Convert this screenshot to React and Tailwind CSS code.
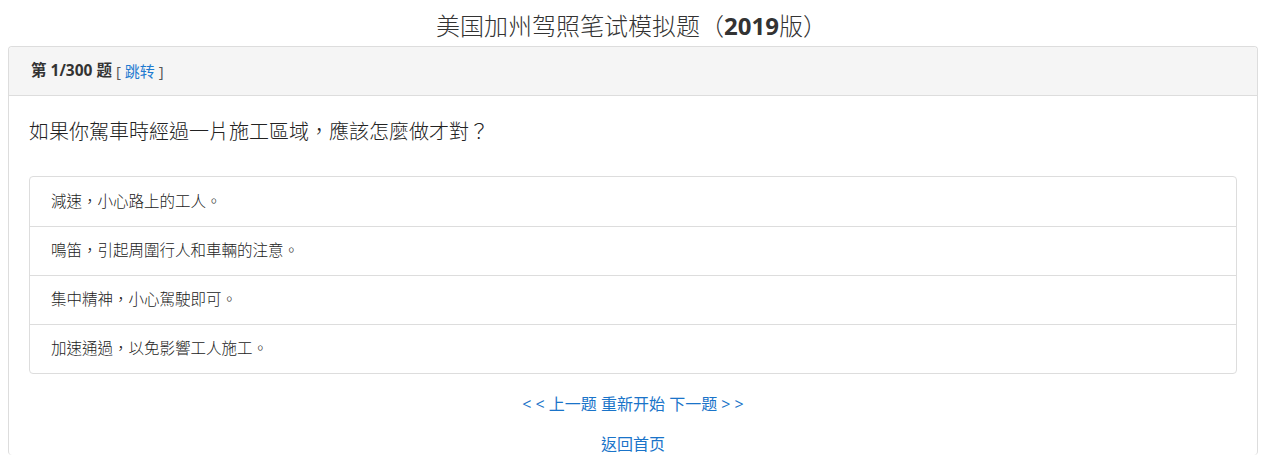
import React from "react";

const answers = [
  "減速，小心路上的工人。",
  "鳴笛，引起周圍行人和車輛的注意。",
  "集中精神，小心駕駛即可。",
  "加速通過，以免影響工人施工。",
];

const font = { fontFamily: '"Open Sans", "Noto Sans CJK TC", "Noto Sans CJK SC", sans-serif' };

export default function App() {
  return (
    <div className="bg-white text-[#333] w-[1263px] h-[470px] overflow-hidden" style={font}>
      {/* 标题 */}
      <h3 className="text-center text-[24px] leading-[26px] pt-[13px] pb-[7px] text-[#333] font-light">
        美国加州驾照笔试模拟题（<b className="font-bold">2019</b>版）
      </h3>
      <div className="ml-[8px] mr-[5px] border border-[#ddd] rounded-[4px] border-b-0">
        <div className="bg-[#f5f5f5] border-b border-[#ddd] h-[49px] px-[22px] flex items-center text-[15.5px] rounded-t-[4px]">
          <span className="font-bold">第 1/300 题</span>
          <span className="ml-1 text-[#555] text-[15px]">
            [ <a className="text-[#1f7bd0]">跳转</a> ]
          </span>
        </div>
        <div className="px-[20px] pt-[22px]">
          <div className="text-[20px] leading-[28px] text-[#222] font-light">
            如果你駕車時經過一片施工區域，應該怎麼做才對？
          </div>
          <div className="mt-[30px] border border-[#ddd] rounded-[4px]">
            {answers.map((a, i) => (
              <div
                key={i}
                className={
                  "h-[49px] flex items-center pl-[21px] text-[15.5px] text-[#222] font-light " +
                  (i > 0 ? "border-t border-[#ddd]" : "")
                }
              >
                {a}
              </div>
            ))}
          </div>
          <div className="text-center text-[#1a74c9] text-[16px] mt-[19px] leading-[22px]">
            &lt; &lt; 上一题 重新开始 下一题 &gt; &gt;
          </div>
          <div className="text-center text-[#1a74c9] text-[16px] mt-[18px] leading-[22px]">
            返回首页
          </div>
        </div>
      </div>
    </div>
  );
}
